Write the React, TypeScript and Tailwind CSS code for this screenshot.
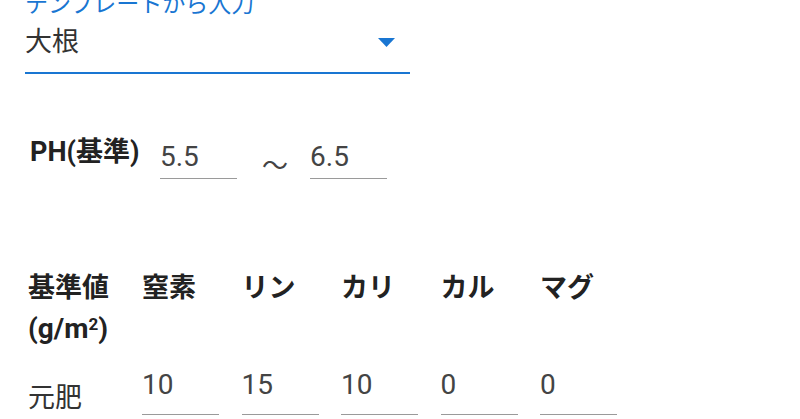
import React from "react";

const font = { fontFamily: 'Roboto, "Noto Sans CJK JP", sans-serif' };

const columns = [
  { name: "窒素", value: "10" },
  { name: "リン", value: "15" },
  { name: "カリ", value: "10" },
  { name: "カル", value: "0" },
  { name: "マグ", value: "0" },
];

function Field({ value, className = "" }: { value: string; className?: string }) {
  return (
    <div className={`w-[77px] border-b border-[#9a9a9a] ${className}`}>
      <span className="block text-[28px] leading-[34px] text-[#444]">{value}</span>
    </div>
  );
}

export default function App() {
  return (
    <div className="w-[800px] h-[419px] overflow-hidden bg-white pl-[25px]" style={font}>
      {/* テンプレート選択 */}
      <div className="w-[385px] -mt-[8px]">
        <div className="text-[23px] leading-[26px] text-[#1976d2]">テンプレートから入力</div>
        <div className="flex items-center justify-between h-[56px] pb-[6px] border-b-2 border-[#1976d2]">
          <span className="text-[27px] leading-[34px] text-[#333]">大根</span>
          <svg width="17" height="9" viewBox="0 0 17 9" className="mr-[15px]">
            <path d="M0 0 L17 0 L8.5 9 Z" fill="#1976d2" />
          </svg>
        </div>
      </div>

      {/* PH */}
      <div className="flex items-start mt-[61px] pl-[5px]">
        <span className="w-[130px] text-[27px] leading-[34px] font-bold text-[#222]">PH(基準)</span>
        <Field value="5.5" className="mt-[5px] pb-[4px]" />
        <span className="ml-[25px] mr-[22px] mt-[14px] text-[26px] leading-[34px] text-[#444]">～</span>
        <Field value="6.5" className="mt-[5px] pb-[4px]" />
      </div>

      {/* 基準値 */}
      <div className="grid grid-cols-[114px_repeat(5,99.5px)] mt-[88px] pl-[3px] text-[#222]">
        <div className="font-bold text-[27px] leading-[34px]">
          基準値
          <div className="text-[28px] leading-[34px] mt-[7px]">
            (g/m<sup className="text-[17px]">2</sup>)
          </div>
        </div>
        {columns.map((c) => (
          <div key={c.name} className="font-bold text-[27px] leading-[34px]">
            {c.name}
          </div>
        ))}
        <div className="mt-[35px] text-[27px] leading-[34px] text-[#333]">元肥</div>
        {columns.map((c) => (
          <Field key={c.name} value={c.value} className="mt-[22px] pb-[4px]" />
        ))}
      </div>
    </div>
  );
}
